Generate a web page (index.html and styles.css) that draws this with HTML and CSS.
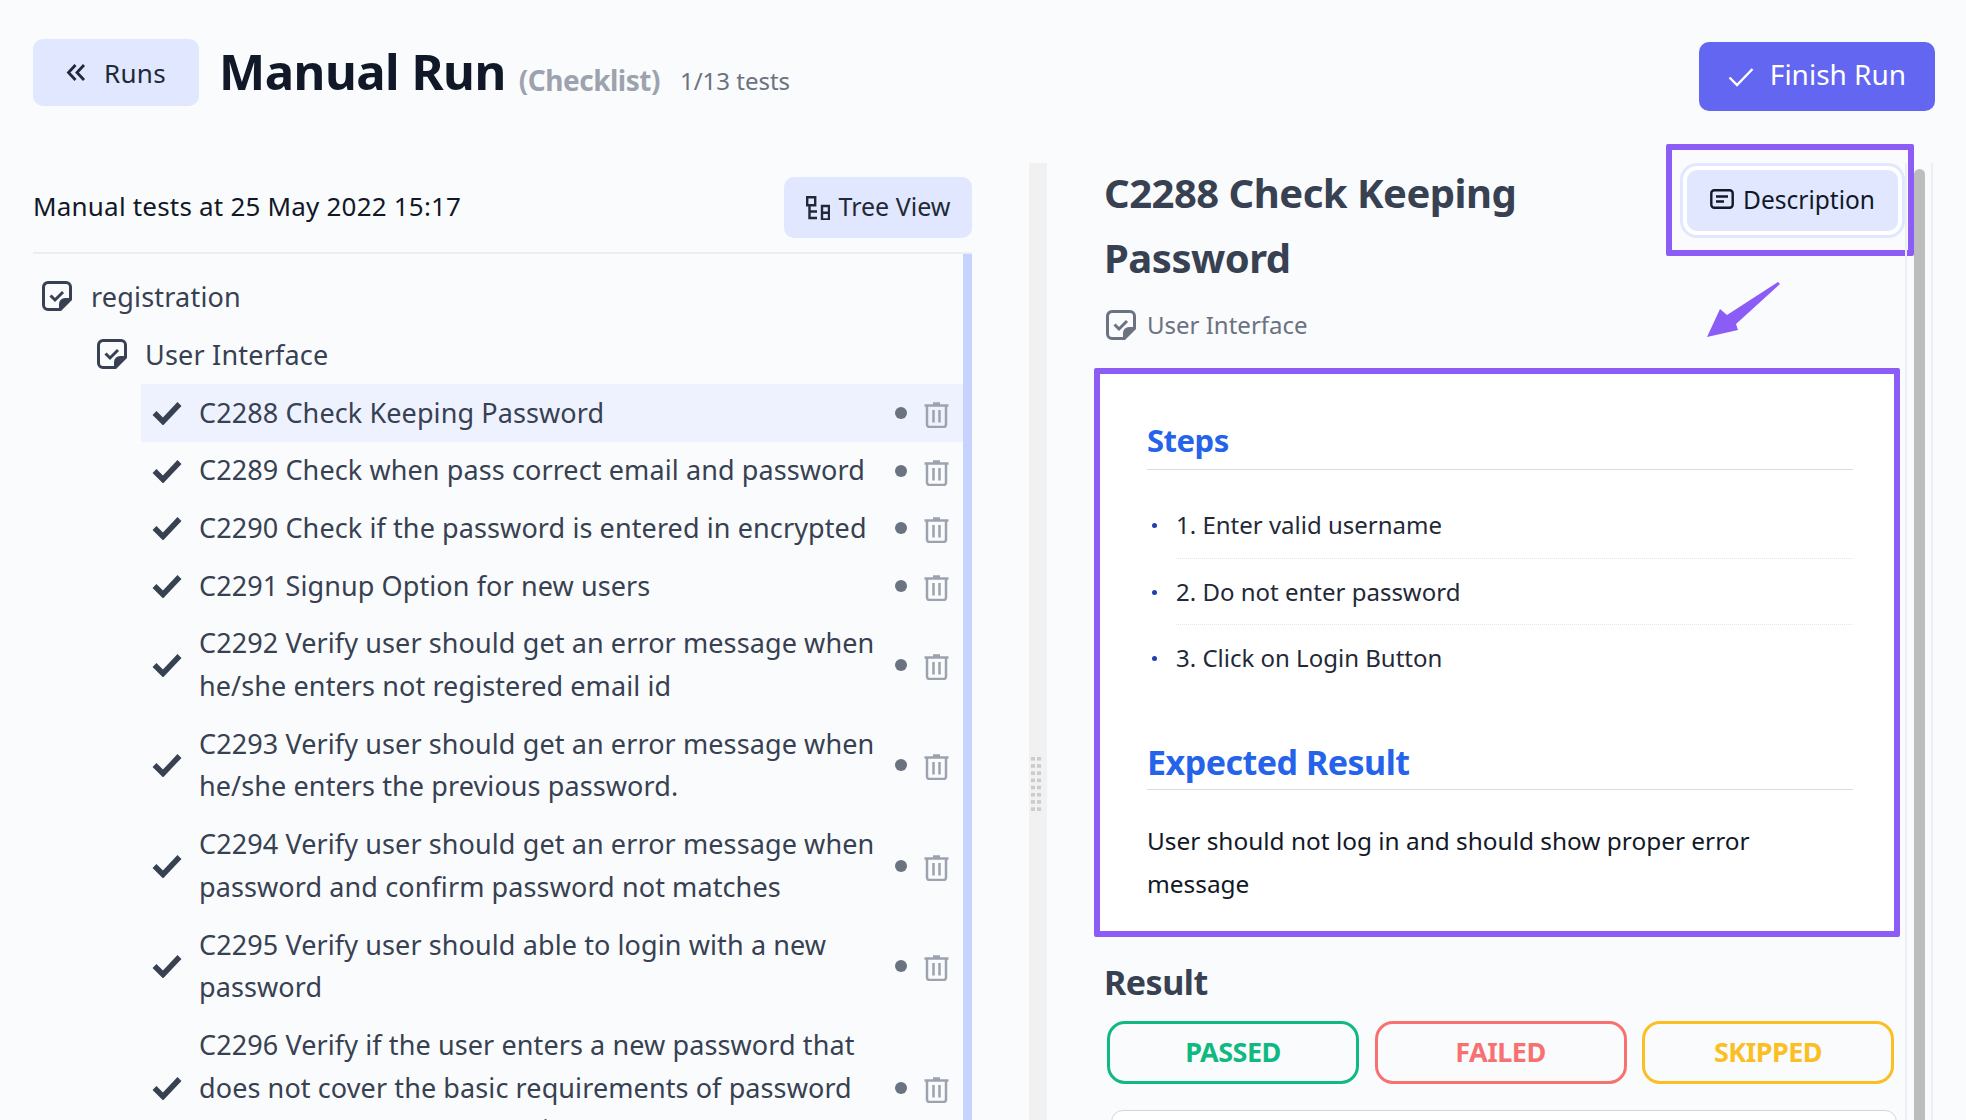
FILE: index.html
```html
<!DOCTYPE html>
<html lang="en">
<head>
  <meta charset="UTF-8">
  <title>Manual Run</title>
  <link rel="stylesheet" href="styles.css">
</head>
<body>

  <svg class="sprites" width="0" height="0">
    <symbol id="i-note" viewBox="0 0 30 30">
      <path d="M18 28.500H6A4.500 4.500 0 0 1 1.500 24V6A4.500 4.500 0 0 1 6 1.500h18A4.500 4.500 0 0 1 28.500 6v12" fill="none" stroke="currentColor" stroke-width="3"/>
      <path d="M30 17v2L19 30h-2v-7a6 6 0 0 1 6-6z" fill="currentColor"/>
      <path d="M8.500 14.500l4.500 4.500 8-8" fill="none" stroke="currentColor" stroke-width="3"/>
    </symbol>
    <symbol id="i-check" viewBox="0 0 30 24">
      <path d="M2.500 12l8.500 8.500L27.500 3" fill="none" stroke="currentColor" stroke-width="5.500"/>
    </symbol>
    <symbol id="i-trash" viewBox="0 0 25 27">
      <path d="M9 2.500h7M0.500 4.500h24" stroke="currentColor" stroke-width="2.500" fill="none"/>
      <path d="M3 4.500v19a2.500 2.500 0 0 0 2.500 2.500h14a2.500 2.500 0 0 0 2.500-2.500v-19" stroke="currentColor" stroke-width="2.500" fill="none"/>
      <path d="M9.500 9v12.500M15.500 9v12.500" stroke="currentColor" stroke-width="2.500" fill="none"/>
    </symbol>
  </svg>

  <div class="page">

    <header class="top">
      <a class="btn btn-runs">
        <svg class="icon-runs" viewBox="0 0 20 19"><path d="M9.500 2L2.500 9.500l7 7.500M18 2l-7 7.500 7 7.500" fill="none" stroke="currentColor" stroke-width="2.800"/></svg>
        Runs
      </a>
      <h1>Manual Run</h1>
      <span class="kind">(Checklist)</span>
      <span class="count">1/13 tests</span>
      <a class="btn btn-finish">
        <svg class="icon-finish" viewBox="0 0 26 20"><path d="M1.500 10.500l7.500 7.500L24.500 2" fill="none" stroke="currentColor" stroke-width="2.400"/></svg>
        Finish Run
      </a>
    </header>

    <main class="columns">

      <section class="left">
        <div class="left-head">
          <span class="left-title">Manual tests at 25 May 2022 15:17</span>
          <a class="btn btn-tree">
            <svg class="icon-tree" viewBox="0 0 24 24"><path d="M1.200 1.200h8v8h-8zM16 10h7v13.500h-7zM16 16.700h7M3.500 9.200v12.800h7.500M3.500 15.500h7.500" fill="none" stroke="currentColor" stroke-width="2.400"/></svg>
            Tree View
          </a>
        </div>

        <div class="tree">
          <div class="suite"><svg class="icon-note"><use href="#i-note"/></svg>registration</div>
          <div class="suite suite-sub"><svg class="icon-note"><use href="#i-note"/></svg>User Interface</div>

          <div class="test active">
            <svg class="icon-check"><use href="#i-check"/></svg>
            <span class="test-name">C2288 Check Keeping Password</span>
            <span class="dot"></span>
            <svg class="icon-trash"><use href="#i-trash"/></svg>
          </div>
          <div class="test">
            <svg class="icon-check"><use href="#i-check"/></svg>
            <span class="test-name">C2289 Check when pass correct email and password</span>
            <span class="dot"></span>
            <svg class="icon-trash"><use href="#i-trash"/></svg>
          </div>
          <div class="test">
            <svg class="icon-check"><use href="#i-check"/></svg>
            <span class="test-name">C2290 Check if the password is entered in encrypted</span>
            <span class="dot"></span>
            <svg class="icon-trash"><use href="#i-trash"/></svg>
          </div>
          <div class="test">
            <svg class="icon-check"><use href="#i-check"/></svg>
            <span class="test-name">C2291 Signup Option for new users</span>
            <span class="dot"></span>
            <svg class="icon-trash"><use href="#i-trash"/></svg>
          </div>
          <div class="test">
            <svg class="icon-check"><use href="#i-check"/></svg>
            <span class="test-name">C2292 Verify user should get an error message when he/she enters not registered email id</span>
            <span class="dot"></span>
            <svg class="icon-trash"><use href="#i-trash"/></svg>
          </div>
          <div class="test">
            <svg class="icon-check"><use href="#i-check"/></svg>
            <span class="test-name">C2293 Verify user should get an error message when he/she enters the previous password.</span>
            <span class="dot"></span>
            <svg class="icon-trash"><use href="#i-trash"/></svg>
          </div>
          <div class="test">
            <svg class="icon-check"><use href="#i-check"/></svg>
            <span class="test-name">C2294 Verify user should get an error message when password and confirm password not matches</span>
            <span class="dot"></span>
            <svg class="icon-trash"><use href="#i-trash"/></svg>
          </div>
          <div class="test">
            <svg class="icon-check"><use href="#i-check"/></svg>
            <span class="test-name">C2295 Verify user should able to login with a new password</span>
            <span class="dot"></span>
            <svg class="icon-trash"><use href="#i-trash"/></svg>
          </div>
          <div class="test">
            <svg class="icon-check"><use href="#i-check"/></svg>
            <span class="test-name">C2296 Verify if the user enters a new password that does not cover the basic requirements of password an error message appears in</span>
            <span class="dot"></span>
            <svg class="icon-trash"><use href="#i-trash"/></svg>
          </div>
        </div>
      </section>

      <div class="gutter"><span class="grip"></span></div>

      <section class="detail">
        <div class="detail-head">
          <h2>C2288 Check Keeping Password</h2>
          <a class="btn btn-desc">
            <svg class="icon-desc" viewBox="0 0 24 20"><rect x="1.300" y="1.300" width="21.400" height="17.400" rx="3" fill="none" stroke="currentColor" stroke-width="2.400"/><path d="M6 7.500h12M6 12.500h8" stroke="currentColor" stroke-width="2.400"/></svg>
            Description
          </a>
        </div>
        <div class="crumb"><svg class="icon-note"><use href="#i-note"/></svg>User Interface</div>

        <div class="card">
          <h3 class="steps-title">Steps</h3>
          <ul class="steps">
            <li>1. Enter valid username</li>
            <li>2. Do not enter password</li>
            <li>3. Click on Login Button</li>
          </ul>
          <h3 class="expected-title">Expected Result</h3>
          <p class="expected">User should not log in and should show proper error message</p>
        </div>

        <h4 class="result-title">Result</h4>
        <div class="result-btns">
          <a class="result passed">PASSED</a>
          <a class="result failed">FAILED</a>
          <a class="result skipped">SKIPPED</a>
        </div>
        <div class="comment"></div>

        <!-- annotations drawn over the screenshot -->
        <div class="mark-desc"></div>
        <svg class="mark-arrow" viewBox="0 0 74 56"><path d="M72 0L74 2 30 42 32 48 1 55 14 27 21 33z" fill="#8b5cf6"/></svg>
      </section>

      <div class="scrollbar"><span class="thumb"></span></div>

    </main>
  </div>

</body>
</html>
```

FILE: styles.css
```css
* {
  box-sizing: border-box;
}
body {
  margin: 0;
  background: #fafbfd;
  font-family: "Noto Sans", "Open Sans", sans-serif;
  color: #374151;
}
.sprites {
  position: absolute;
}
.page {
  width: 1966px;
  height: 1120px;
  overflow: hidden;
}

/* buttons */
.btn {
  display: flex;
  align-items: center;
  justify-content: center;
  background: #e0e7ff;
  color: #111827;
  border-radius: 10px;
  font-size: 26px;
  cursor: pointer;
}

/* header */
.top {
  height: 163px;
  padding: 39px 31px 0 33px;
  display: flex;
  align-items: flex-start;
}
.btn-runs {
  width: 166px;
  height: 67px;
  gap: 18px;
  color: #1f2937;
  letter-spacing: 0.3px;
}
.icon-runs {
  width: 20px;
  height: 19px;
}
h1 {
  margin: 0 0 0 20px;
  font-size: 49px;
  line-height: 64px;
  font-weight: 700;
  color: #111827;
  letter-spacing: -0.5px;
}
.kind {
  margin: 13px 0 0 13px;
  font-size: 28px;
  line-height: 56px;
  font-weight: 700;
  color: #9ca3af;
  letter-spacing: -0.5px;
}
.count {
  margin: 14px 0 0 20px;
  font-size: 24px;
  line-height: 56px;
  color: #6b7280;
}
.btn-finish {
  margin: 3px 0 0 auto;
  width: 236px;
  height: 69px;
  gap: 16px;
  padding-bottom: 6px;
  background: #6366f1;
  color: #fff;
  font-size: 28px;
}
.icon-finish {
  width: 26px;
  height: 20px;
  margin-top: 6px;
}

/* two columns */
.columns {
  display: flex;
  height: 957px;
}
.left {
  width: 939px;
  margin-left: 33px;
  padding-top: 15px;
}
.left-head {
  display: flex;
  justify-content: space-between;
  align-items: center;
  height: 76px;
  padding-bottom: 15px;
  border-bottom: 2px solid #eceef2;
}
.left-title {
  padding-bottom: 4px;
  font-size: 26px;
  color: #111827;
  letter-spacing: 0.2px;
}
.btn-tree {
  width: 188px;
  height: 61px;
  gap: 9px;
  padding-bottom: 4px;
  font-size: 25px;
  color: #1f2937;
}
.icon-tree {
  width: 24px;
  height: 24px;
  margin-top: 4px;
}

/* tree */
.tree {
  height: 880px;
  padding-top: 14px;
  border-right: 9px solid #c7d2fe;
}
.suite {
  height: 58px;
  padding-left: 9px;
  padding-bottom: 2px;
  display: flex;
  align-items: center;
  gap: 19px;
  font-size: 27px;
  letter-spacing: 0.2px;
}
.suite-sub {
  padding-left: 64px;
  gap: 18px;
}
.icon-note {
  width: 30px;
  height: 30px;
  color: #374151;
}
.test {
  margin-left: 108px;
  padding: 7.500px 11px;
  display: flex;
  align-items: center;
  font-size: 27px;
  line-height: 42.700px;
  letter-spacing: 0.1px;
}
.test.active {
  background: #eef2ff;
}
.icon-check {
  flex: none;
  width: 30px;
  height: 24px;
  margin-right: 17px;
}
.test-name {
  width: 684px;
  flex: none;
}
.dot {
  flex: none;
  width: 12px;
  height: 12px;
  margin-left: 12px;
  border-radius: 50%;
  background: #6b7280;
}
.icon-trash {
  flex: none;
  width: 25px;
  height: 27px;
  margin: 3px 0 0 17px;
  color: #9ca3af;
}

/* splitter */
.gutter {
  width: 18px;
  margin-left: 57px;
  background: #f1f1f2;
  padding: 594px 0 0 2px;
}
.grip {
  display: block;
  width: 10px;
  height: 55px;
  background:
    linear-gradient(90deg, transparent 4px, #f1f1f2 4px, #f1f1f2 6px, transparent 6px),
    linear-gradient(#cccccf 4px, transparent 4px) 0 0 / 10px 7.200px;
}

/* right side */
.detail {
  position: relative;
  width: 859px;
  padding: 0 6px 0 57px;
}
.detail-head {
  display: flex;
  justify-content: space-between;
  align-items: flex-start;
}
h2 {
  margin: -3px 0 0;
  width: 450px;
  font-size: 40px;
  line-height: 65px;
  font-weight: 700;
  color: #374151;
  letter-spacing: -0.5px;
}
.btn-desc {
  margin: 7px 2px 0 0;
  width: 211px;
  height: 61px;
  gap: 9px;
  padding-bottom: 3px;
  font-size: 24.500px;
  box-shadow: 0 0 0 4px #fff, 0 0 0 7px #e0e7ff;
}
.icon-desc {
  width: 24px;
  height: 20px;
}
.crumb {
  margin: 10px 0 0 2px;
  display: flex;
  align-items: center;
  gap: 11px;
  font-size: 24px;
  line-height: 50px;
  color: #6b7280;
}
.crumb .icon-note {
  color: #6b7280;
}
.card {
  margin: 18px 0 0 -10px;
  width: 806px;
  height: 569px;
  padding: 43px 41px 0 47px;
  background: #fff;
  border: 6px solid #8b5cf6;
  border-radius: 2px;
}
.steps-title {
  margin: 0;
  padding-bottom: 5px;
  border-bottom: 1px solid #d5dde6;
  font-size: 31px;
  line-height: 47px;
  font-weight: 700;
  color: #2563eb;
  letter-spacing: -0.5px;
}
.steps {
  list-style: none;
  margin: 22px 0 0;
  padding: 0 0 0 29px;
  font-size: 24px;
  color: #1f2937;
}
.steps li {
  position: relative;
  height: 66.500px;
  line-height: 66px;
  border-bottom: 1px dotted #e5e7eb;
}
.steps li:last-child {
  border-bottom: none;
}
.steps li::before {
  content: "";
  position: absolute;
  left: -24px;
  top: 31px;
  width: 5px;
  height: 5px;
  border-radius: 50%;
  background: #1e40af;
}
.expected-title {
  margin: 45.500px 0 0;
  padding-bottom: 2px;
  border-bottom: 1px solid #d5dde6;
  font-size: 34px;
  line-height: 50px;
  font-weight: 700;
  color: #2563eb;
  letter-spacing: -0.5px;
}
.expected {
  margin: 29px 0 0;
  font-size: 24.400px;
  line-height: 43px;
  color: #111827;
}
.result-title {
  margin: 20px 0 0;
  font-size: 34px;
  line-height: 50px;
  font-weight: 700;
  color: #374151;
  letter-spacing: -0.5px;
}
.result-btns {
  margin: 14px 0 0 3px;
  display: flex;
  gap: 15.500px;
}
.result {
  width: 252px;
  height: 63px;
  padding-bottom: 2px;
  border: 3.500px solid;
  border-radius: 18px;
  display: flex;
  align-items: center;
  justify-content: center;
  font-size: 27px;
  font-weight: 700;
  cursor: pointer;
  letter-spacing: -0.5px;
}
.passed {
  color: #10b981;
}
.failed {
  color: #f87171;
}
.skipped {
  color: #fbbf24;
}
.comment {
  margin: 26px 0 0 7px;
  width: 786px;
  height: 60px;
  background: #fff;
  border: 1px solid #d1d5db;
  border-radius: 12px;
}

/* annotations */
.mark-desc {
  position: absolute;
  left: 619px;
  top: -19px;
  width: 248px;
  height: 112px;
  border: 6px solid #8b5cf6;
  border-radius: 2px;
}
.mark-arrow {
  position: absolute;
  left: 659px;
  top: 119px;
  width: 74px;
  height: 56px;
}

/* detail scrollbar */
.scrollbar {
  width: 28px;
  margin-left: -1px;
  padding: 6px 6px 0 7px;
  border-left: 2px solid #eceef2;
  border-right: 2px solid #eceef2;
  position: relative;
  z-index: 1;
}
.thumb {
  display: block;
  height: 100%;
  background: #bdbdbd;
  border-radius: 8px 8px 0 0;
}
```
